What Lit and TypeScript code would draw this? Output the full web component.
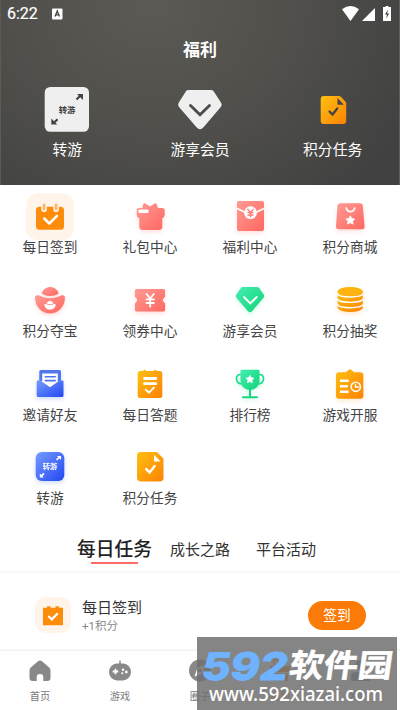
import { LitElement, html, svg, css } from "lit";
import { customElement } from "lit/decorators.js";

const gradients = svg`<defs>
  <linearGradient id="red" x1="0" y1="0" x2="1" y2="1"><stop offset="0" stop-color="#ff9a94"/><stop offset="1" stop-color="#ff6861"/></linearGradient>
  <linearGradient id="orange" x1="0" y1="0" x2="1" y2="1"><stop offset="0" stop-color="#fdc012"/><stop offset="1" stop-color="#fd8204"/></linearGradient>
  <linearGradient id="green" x1="0" y1="0" x2="1" y2="1"><stop offset="0" stop-color="#43eeb2"/><stop offset="1" stop-color="#12d377"/></linearGradient>
  <linearGradient id="blue" x1="0" y1="0" x2="1" y2="1"><stop offset="0" stop-color="#769cff"/><stop offset="1" stop-color="#2248f2"/></linearGradient>
</defs>`;

const arrows = svg`
  <path d="M30.500 17l3-3" fill="none" stroke="currentColor" stroke-width="1.700"/><path d="M31 13h4v4z" fill="currentColor"/>
  <path d="M18 30.300l-3 3" fill="none" stroke="currentColor" stroke-width="1.700"/><path d="M13.800 30.500v4h4z" fill="currentColor"/>`;

const STAR = "M0-5L1.600-2 5-1.500 2.500 1 3.100 4.300 0 2.800-3.100 4.300-2.500 1-5-1.500-1.600-2z";

const icons: Record<string, unknown> = {
  calendar: svg`
    <rect y="1.300" width="48" height="46.700" rx="12" fill="#fff4e9"/>
    <rect x="10" y="14.800" width="28" height="23" rx="3.500" fill="#fe8c0b"/>
    <rect x="15.300" y="10.500" width="5.600" height="9.500" rx="2.800" fill="#fff4e9"/>
    <rect x="27.300" y="10.500" width="5.600" height="9.500" rx="2.800" fill="#fff4e9"/>
    <rect x="16.700" y="11.500" width="2.800" height="7" rx="1.400" fill="#fdb76a"/>
    <rect x="28.700" y="11.500" width="2.800" height="7" rx="1.400" fill="#fdb76a"/>
    <path d="M18.300 26.500l5 5 7.700-7.700" fill="none" stroke="#fff" stroke-width="2.500" stroke-linecap="round" stroke-linejoin="round"/>`,
  gift: svg`
    <path d="M17.300 12.300q.6-1.500 2-.8l4.700 3 4.700-3q1.400-.7 2 .8l1.200 3.700h4.300q2.500 0 2.500 2.500v4q0 3-2.400 3.800V34.500q0 3.500-3.500 3.500H16.800q-3.500 0-3.500-3.500V26.300q-2.600-.8-2.600-3.800v-4q0-2.500 2.500-2.500h3z" fill="url(#red)"/>
    <rect x="12.300" y="17.500" width="10.400" height="3.400" rx="1.500" fill="#fff"/>`,
  packet: svg`
    <rect x="11" y="9" width="27" height="30" rx="2" fill="url(#red)"/>
    <path d="M11 16.500l8 3.700M38 16.500l-8 3.700" stroke="#fff" stroke-width="1.500" fill="none"/>
    <circle cx="24.500" cy="20.700" r="6.400" fill="#fff"/>
    <path d="M21.500 16.800l3 3.800 3-3.800M24.500 20.600v4.600M21.500 20.700h6M21.500 23h6" fill="none" stroke="#ff7972" stroke-width="1.300"/>`,
  bag: svg`
    <path d="M14.300 11.300h19.500q2.800 0 3 2.500l1.800 20.500q.2 3-2.800 3H12.700q-3 0-2.700-3l1.500-20.500q.2-2.500 2.800-2.500z" fill="url(#red)"/>
    <path d="M20.200 16q1 3.600 4.300 3.600T28.800 16" stroke="#fff" stroke-width="1.600" fill="none" stroke-linecap="round"/>
    <path transform="translate(24.300 28.300) scale(.88)" d=${STAR} fill="#fff" stroke="#fff" stroke-linejoin="round"/>`,
  ingot: svg`
    <path d="M15.700 17.300C18.500 8.900 29.800 8.900 32.700 17.300 29.500 21 18.900 21 15.700 17.300z" fill="url(#red)"/>
    <path d="M9 22q0-3 3-2.700l2.200.5c4 3.200 15.600 3.200 19.800 0l2.200-.5Q39 19 39 22C38 42.500 10 42.500 9 22z" fill="url(#red)"/>
    <path d="M20.300 27.300q3.800-5.200 7.400 0-3.600 1.800-7.400 0zM18.300 28.800q.2-1.200 1.500-.8 4.200 2 8.400 0 1.300-.4 1.500.8c-.8 6.500-10.600 6.500-11.400 0z" fill="#fff"/>`,
  ticket: svg`
    <path d="M10.500 13h27q1.600 0 1.600 1.600v6.200q-4.600 3.400 0 6.800v6.200q0 1.600-1.600 1.600h-27q-1.600 0-1.600-1.600v-6.200q4.600-3.400 0-6.800v-6.200Q8.900 13 10.500 13z" fill="url(#red)"/>
    <path d="M20.600 18l3.600 4.500 3.600-4.500M24.200 22.500v8.200M20.500 23.400h7.400M20.500 27h7.400" fill="none" stroke="#fff" stroke-width="1.800" stroke-linecap="round"/>`,
  gem: svg`
    <path d="M16.800 11h14.400q1.200 0 2 .9l4.600 6.800q1 1.600-.3 3L26 35.200q-2 2-4 0L10.400 21.700q-1.200-1.400-.2-3l4.700-6.800q.7-.9 1.900-.9z" fill="url(#green)"/>
    <path d="M18 21l6.300 6.300L30.700 21" stroke="#fff" stroke-width="1.900" fill="none" stroke-linecap="round"/>`,
  coins: svg`
    <path d="M11.700 15.500v16.300C13 37.500 35.500 37.500 36.800 31.800V15.500z" fill="url(#orange)"/>
    <ellipse cx="24.200" cy="15.300" rx="12.500" ry="4.400" fill="#fdb40e"/>
    <path d="M11.200 17.500c2 4.600 24 4.600 26.100 0M11.200 22.900c2 4.600 24 4.600 26.100 0M11.200 28.300c2 4.600 24 4.600 26.100 0" stroke="#fff" stroke-width="1.400" fill="none"/>`,
  mail: svg`
    <path d="M13.300 21V11.500q0-1.500 1.500-1.500h18.700q1.500 0 1.500 1.500V21z" fill="#5077ec"/>
    <path d="M10.700 21.500q0-1 1-1h2.600L24 27.200l9.500-6.700h3q1 0 1 1v14q0 1.500-1.500 1.500H12.200q-1.500 0-1.500-1.500z" fill="url(#blue)"/>
    <path d="M16.200 13.500h15.600v8L24 27l-7.800-5.500z" fill="#fff"/>
    <path d="M19.300 16.700h10M19.300 20.600h10" stroke="#4d74f5" stroke-width="1.600" stroke-linecap="round"/>`,
  notepad: svg`
    <path d="M14.200 11h2.900q1.600-2.600 3.200 0h7.400q1.600-2.600 3.200 0h2.900q2.500 0 2.500 2.500v22q0 2.500-2.500 2.500H14.200q-2.500 0-2.500-2.500v-22q0-2.500 2.500-2.500z" fill="url(#orange)"/>
    <path d="M18.500 18.500h11.400M18.500 23.700h11.400" stroke="#fff" stroke-width="2.800" stroke-linecap="round"/>
    <path d="M19.800 29.600l3.100 3 5-5" stroke="#fff" stroke-width="1.900" fill="none" stroke-linecap="round"/>`,
  trophy: svg`
    <path d="M15 14.500q-4.500-.2-4.500 4.300 0 5.300 6.500 5.200M33 14.500q4.500-.2 4.500 4.300 0 5.300-6.500 5.200" stroke="#20dc8d" stroke-width="1.700" fill="none"/>
    <path d="M15.500 9.700h17q1 0 1 1V20C33.500 33.300 14.500 33.300 14.500 20v-9.300q0-1 1-1z" fill="url(#green)"/>
    <path d="M24 28v9M17 37.300h14" stroke="#17d680" stroke-width="2" stroke-linecap="round"/>
    <path transform="translate(23.900 19.300) scale(.78)" d=${STAR} fill="#fff" stroke="#fff" stroke-linejoin="round"/>`,
  clipboard: svg`
    <path d="M13 12.300h7l2.500-2.400q1.500-1.200 3 0l2.500 2.400h6.300q3 0 3 3v20.400q0 3-3 3H13q-3 0-3-3V15.300q0-3 3-3z" fill="url(#orange)"/>
    <path d="M14 20.700h8.700M14 26.300h7.700M14 31.800h8.700" stroke="#fff" stroke-width="2.500"/>
    <circle cx="29.800" cy="26.800" r="4.600" fill="none" stroke="#fff" stroke-width="1.600"/>
    <path d="M29.500 23.700V27H33" stroke="#fff" stroke-width="1.300" fill="none"/>`,
  transfer: svg`
    <rect x="9.700" y="9" width="28.600" height="29" rx="6" fill="url(#blue)"/>
    <g color="#fff">${arrows}</g>
    <text x="24" y="26.200" text-anchor="middle" class="glyph" fill="#fff" font-size="7.300">转游</text>`,
  file: svg`
    <path d="M14.500 9H30q1 0 1.700.7l5 5q.8.8.8 1.800v18q0 4-4 4H15q-4 0-4-4V12.500Q11 9 14.500 9z" fill="url(#orange)"/>
    <path d="M28 11.800l6.600 6.700H28z" fill="#fff"/>
    <path d="M20.200 26.200l3.400 3.300 5-6.500" fill="none" stroke="#fff" stroke-width="2.500" stroke-linecap="round"/>`,
  transferLight: svg`
    <rect x="1.700" y="2" width="44.300" height="44.800" rx="5.500" fill="#efefef"/>
    <path d="M33.500 14.500l3.500-3.500M14.500 34.300L11 37.800" stroke="#444" stroke-width="2.200"/>
    <path d="M34 9h6v6zM8.300 33.500v6h6z" fill="#444"/>
    <text x="24" y="27.600" text-anchor="middle" class="glyph" fill="#444" font-size="8.300">转游</text>`,
  gemLight: svg`
    <path d="M12.500 5h22.600q1.700 0 2.700 1.400l7.300 11.400q1.400 2.200-.3 4.200L27.500 42.300q-3.500 3.700-7 0L3 22q-1.700-2-.3-4.200L9.800 6.400Q10.800 5 12.500 5z" fill="#efefef"/>
    <path d="M14.500 20.500l9.500 9.300 9.500-9.300" stroke="#4a4a48" stroke-width="2.800" fill="none" stroke-linecap="round"/>`,
  fileDark: svg`
    <path d="M14.700 11H30q1 0 1.800.8l4.700 4.900q.7.800.7 1.800V36q0 3-3 3H14.700q-3 0-3-3V14q0-3 3-3z" fill="url(#orange)"/>
    <path d="M28.500 13l6.300 6.700h-6.300z" fill="#444"/>
    <path d="M20.500 26.500l3 3 4.800-6" fill="none" stroke="#444" stroke-width="2.300" stroke-linecap="round"/>`,
  checkin: svg`
    <path d="M14 16.800h4v-1.500h3.500v1.500h5v-1.500H30v1.500h4v17.500H14z" fill="#fe8c0b"/>
    <path d="M19.300 25l3.500 3.300 6-6" fill="none" stroke="#fff" stroke-width="2.300"/>`,
};

const navIcons = [
  svg`<path d="M9.700 2.500Q12 .6 14.300 2.500l6.900 6q1.300 1.200 1.300 3V19q0 3-3 3h-4.200v-3.700q0-3.300-3.300-3.300t-3.300 3.300V22H4.500q-3 0-3-3v-7.500q0-1.800 1.300-3z" fill="#888"/>`,
  svg`<path d="M12 1.500V5" stroke="#888" stroke-width="1.500"/><rect x="1" y="4.500" width="22" height="17" rx="8.300" fill="#888"/>
    <path d="M7.500 9.700v5.600M4.700 12.500h5.600" stroke="#fff" stroke-width="1.800"/><circle cx="15" cy="10.700" r="1.200" fill="#fff"/><circle cx="18.300" cy="13" r="1.400" fill="#fff"/><circle cx="14.300" cy="14.300" r="1" fill="#fff"/>`,
  svg`<circle cx="12" cy="11.500" r="11" fill="#888"/><path d="M17.500 5.500l-2.800 9L6.500 17.500l3-8.500z" fill="#fff"/><circle cx="12" cy="11.500" r="2" fill="#888"/>`,
  svg`<g transform="translate(-1 0)"><circle cx="9" cy="3" r="2.500" fill="none" stroke="#fb7a08" stroke-width="1.300"/><circle cx="17" cy="3" r="2.500" fill="none" stroke="#fb7a08" stroke-width="1.300"/><path d="M3 7h20v6H3zM5 14.500h16V22H5z" fill="#fb7a08"/></g>`,
  svg`<circle cx="12.500" cy="6" r="5" fill="#888"/><path d="M3 22v-4q0-5 5-5h9q5 0 5 5v4z" fill="#888"/>`,
];

const tiles: [string, string][] = [
  ["calendar", "每日签到"], ["gift", "礼包中心"], ["packet", "福利中心"], ["bag", "积分商城"],
  ["ingot", "积分夺宝"], ["ticket", "领券中心"], ["gem", "游享会员"], ["coins", "积分抽奖"],
  ["mail", "邀请好友"], ["notepad", "每日答题"], ["trophy", "排行榜"], ["clipboard", "游戏开服"],
  ["transfer", "转游"], ["file", "积分任务"],
];
const glow: Record<string, string> = {
  gift: "red", packet: "red", bag: "red", ingot: "red", ticket: "red",
  gem: "green", trophy: "green", coins: "orange", clipboard: "orange", mail: "blue", transfer: "blue",
};
const navLabels = ["首页", "游戏", "圈子", "福利", "我的"];

const icon = (name: string) =>
  html`<svg class="icon ${glow[name] ?? ""}" viewBox="0 0 48 48">${gradients}${icons[name]}</svg>`;

@customElement("app-root")
export class AppRoot extends LitElement {
  static styles = css`
    :host {
      display: flex; flex-direction: column; position: relative;
      width: 400px; height: 710px; overflow: hidden; box-sizing: border-box;
      background: #fff; color: #444;
      font-family: Roboto, "Noto Sans CJK SC", sans-serif;
    }
    .icon { width: 48px; height: 48px; display: block; flex: none; }
    .red { filter: drop-shadow(0 2px 2px rgba(255, 110, 100, .22)); }
    .green { filter: drop-shadow(0 2px 2px rgba(30, 220, 140, .22)); }
    .orange { filter: drop-shadow(0 2px 2px rgba(253, 150, 10, .2)); }
    .blue { filter: drop-shadow(0 2px 2px rgba(50, 90, 245, .22)); }
    .glyph { font-family: "Noto Sans CJK SC", sans-serif; font-weight: 700; }
    .hero {
      height: 185px; flex: none; box-sizing: border-box; color: #fff;
      border-left: 1px solid #5d5b54; border-right: 1px solid #605f5c;
      background: radial-gradient(ellipse 290px 250px at 150px 5px, #5b5a54 0%, #504f4b 50%, #414141 100%);
    }
    .status { height: 28px; display: flex; align-items: center; padding: 0 7px 0 6px; }
    .clock { font-size: 16px; line-height: 28px; width: 45px; -webkit-text-stroke: .2px #fff; }
    .status svg { display: block; }
    .signals { margin-left: auto; }
    .heading { height: 44px; line-height: 44px; text-align: center; font-size: 17px; font-weight: 700; }
    .shortcuts { display: grid; grid-template-columns: repeat(3, 1fr); padding-top: 13px; }
    .shortcut { display: flex; flex-direction: column; align-items: center; font-size: 14.8px; line-height: 22px; gap: 6px; }
    .grid { display: grid; grid-template-columns: repeat(4, 100px); grid-auto-rows: 83.75px; padding-top: 7px; height: 335px; flex: none; }
    .tile { display: flex; flex-direction: column; align-items: center; font-size: 13.7px; line-height: 14px; }
    .tabs { display: flex; height: 46px; flex: none; box-sizing: border-box; border-bottom: 2px solid #f7f7f7; padding: 1px 0 0 77px; align-items: flex-start; line-height: 44px; font-size: 15px; color: #333; }
    .active { position: relative; font-size: 18.800px; font-weight: 500; color: #222; width: 76px; margin-right: 17px; }
    .active::after { content: ""; position: absolute; left: 14px; top: 34px; width: 47px; height: 2px; background: #ff6b66; }
    .tab { margin-right: 26px; }
    .tasks { height: 77px; flex: none; overflow: hidden; box-sizing: border-box; padding: 24px 34px 0 35px; }
    .task { display: flex; align-items: center; height: 36px; margin-bottom: 16px; }
    .badge { width: 36px; height: 36px; border-radius: 11px; background: #fff4e9; display: flex; align-items: center; justify-content: center; margin-right: 11px; overflow: hidden; flex: none; }
    .words { flex: 1; padding-top: 2px; }
    .title { font-size: 15px; line-height: 20px; color: #333; }
    .reward { font-size: 11.500px; line-height: 17px; color: #888; }
    .claim { border: 0; padding: 0; width: 58px; height: 29px; border-radius: 15px; background: #fb7a08; color: #fff; font: 13.7px/29px Roboto, "Noto Sans CJK SC", sans-serif; }
    .nav { flex: 1; display: grid; grid-template-columns: repeat(5, 80px); border-top: 1px solid #f4f4f4; box-shadow: 0 -1px 1px #f7f7f7; background: #fff; }
    .item { display: flex; flex-direction: column; align-items: center; padding-top: 8px; font-size: 10.200px; line-height: 16px; color: #777; gap: 6px; }
    .item svg { width: 24px; height: 24px; display: block; overflow: visible; }
    .current { color: #fb7a08; }
    .mark { position: absolute; left: 197px; top: 637px; width: 200px; height: 73px; background: rgba(112, 112, 112, .85); }
    .mark svg { display: block; }
    .digits { font: 800 38px Inter, sans-serif; fill: #6fb2ff; stroke: #6fb2ff; stroke-width: .8px; }
    .brand { font: 700 32px "Noto Sans CJK SC", sans-serif; fill: #fff; stroke: #fff; stroke-width: .5px; }
    .site { font: 500 20px "Noto Sans", sans-serif; fill: #fff; }
  `;

  render() {
    return html`
      <header class="hero">
        <div class="status">
          <span class="clock">6:22</span>
          <svg width="11" height="12" viewBox="0 0 11 12"><rect y=".5" width="10.500" height="11" rx="1" fill="#fff"/><path d="M3 8.500L5.250 3 7.500 8.500M3.700 6.800h3.100" stroke="#444" stroke-width="1.300" fill="none"/></svg>
          <svg class="signals" width="50" height="16" viewBox="0 0 50 16">
            <path d="M0 3.200Q8.500-3 17 3.200L8.500 15z" fill="#fff"/><path d="M33 2v13H20z" fill="#fff"/>
            <path d="M43.500 0h3v1H49v14h-8V1h2.500z" fill="#fff"/><path d="M46 3.500l-3 5h2l-.8 4 3-5h-2z" fill="#444"/>
          </svg>
        </div>
        <div class="heading">福利</div>
        <div class="shortcuts">
          ${[["transferLight", "转游"], ["gemLight", "游享会员"], ["fileDark", "积分任务"]].map(
            ([name, label]) => html`<div class="shortcut">${icon(name)}<span>${label}</span></div>`
          )}
        </div>
      </header>
      <section class="grid">
        ${tiles.map(([name, label]) => html`<div class="tile">${icon(name)}<span>${label}</span></div>`)}
      </section>
      <div class="tabs"><span class="active">每日任务</span><span class="tab">成长之路</span><span class="tab">平台活动</span></div>
      <section class="tasks">
        <div class="task">
          <div class="badge">${icon("checkin")}</div>
          <div class="words"><div class="title">每日签到</div><div class="reward">+1积分</div></div>
          <button class="claim">签到</button>
        </div>
        <div class="task"><div class="badge"></div></div>
      </section>
      <nav class="nav">
        ${navLabels.map((label, i) => html`<div class="item ${i === 3 ? "current" : ""}">
          <svg viewBox="0 0 24 24">${navIcons[i]}</svg><span>${label}</span></div>`)}
      </nav>
      <div class="mark">
        <svg width="200" height="73" viewBox="0 0 200 73">
          <text class="digits" transform="translate(3 42.500) skewX(-10)" textLength="86" lengthAdjust="spacingAndGlyphs">592</text>
          <text class="brand" transform="translate(91 39.500) skewX(-8)" textLength="103" lengthAdjust="spacingAndGlyphs">软件园</text>
          <text class="site" x="12" y="64" textLength="174" lengthAdjust="spacingAndGlyphs">www.592xiazai.com</text>
        </svg>
      </div>
    `;
  }
}
